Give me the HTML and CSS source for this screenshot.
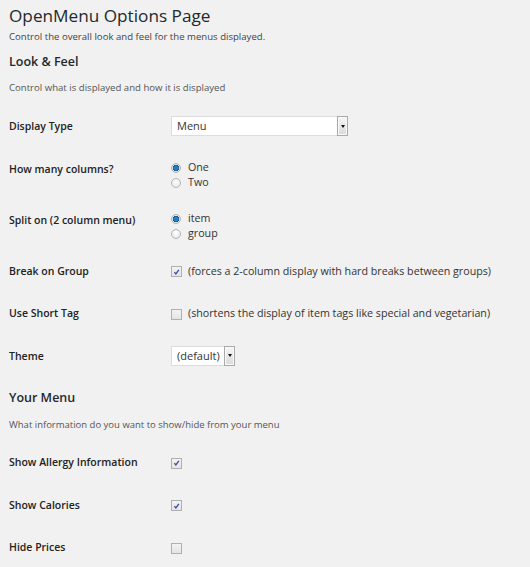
FILE: index.html
```html
<!DOCTYPE html>
<html>
<head>
<meta charset="utf-8">
<link rel="stylesheet" href="styles.css">
</head>
<body>
<div class="page">
  <h1 class="title">OpenMenu Options Page</h1>
  <p class="sub">Control the overall look and feel for the menus displayed.</p>

  <h2 class="section">Look &amp; Feel</h2>
  <p class="desc">Control what is displayed and how it is displayed</p>

  <div class="form">
    <div class="row">
      <div class="label">Display Type</div>
      <div class="field">
        <div class="select wide"><span class="sel-text">Menu</span><span class="sel-btn"><span class="tri"></span></span></div>
      </div>
    </div>
    <div class="row">
      <div class="label">How many columns?</div>
      <div class="field radios">
        <div class="opt"><span class="radio on"></span><span>One</span></div>
        <div class="opt"><span class="radio"></span><span>Two</span></div>
      </div>
    </div>
    <div class="row">
      <div class="label">Split on (2 column menu)</div>
      <div class="field radios">
        <div class="opt"><span class="radio on"></span><span>item</span></div>
        <div class="opt"><span class="radio"></span><span>group</span></div>
      </div>
    </div>
    <div class="row">
      <div class="label">Break on Group</div>
      <div class="field check-line">
        <span class="checkbox on"><svg viewBox="0 0 10 10" width="10" height="10"><path d="M2.6 5.2 L4.3 7.2 L7.6 2.6" fill="none" stroke="#3a4fa8" stroke-width="1.5"/></svg></span>
        <span>(forces a 2-column display with hard breaks between groups)</span>
      </div>
    </div>
    <div class="row">
      <div class="label">Use Short Tag</div>
      <div class="field check-line">
        <span class="checkbox"></span>
        <span>(shortens the display of item tags like special and vegetarian)</span>
      </div>
    </div>
    <div class="row">
      <div class="label">Theme</div>
      <div class="field">
        <div class="select narrow"><span class="sel-text">(default)</span><span class="sel-btn"><span class="tri"></span></span></div>
      </div>
    </div>
  </div>

  <h2 class="section s2">Your Menu</h2>
  <p class="desc d2">What information do you want to show/hide from your menu</p>

  <div class="form f2">
    <div class="row">
      <div class="label">Show Allergy Information</div>
      <div class="field check-line">
        <span class="checkbox on"><svg viewBox="0 0 10 10" width="10" height="10"><path d="M2.6 5.2 L4.3 7.2 L7.6 2.6" fill="none" stroke="#3a4fa8" stroke-width="1.5"/></svg></span>
      </div>
    </div>
    <div class="row">
      <div class="label">Show Calories</div>
      <div class="field check-line">
        <span class="checkbox on"><svg viewBox="0 0 10 10" width="10" height="10"><path d="M2.6 5.2 L4.3 7.2 L7.6 2.6" fill="none" stroke="#3a4fa8" stroke-width="1.5"/></svg></span>
      </div>
    </div>
    <div class="row">
      <div class="label">Hide Prices</div>
      <div class="field check-line">
        <span class="checkbox"></span>
      </div>
    </div>
  </div>
</div>
</body>
</html>
```

FILE: styles.css
```css
html, body {
  margin: 0;
  padding: 0;
  background: #f1f1f1;
}
body {
  font-family: "Open Sans", "Liberation Sans", sans-serif;
  color: #222;
}
.page {
  padding: 5px 9px 0 9px;
}
.title {
  margin: 0;
  font-size: 17.2px;
  line-height: 22px;
  font-weight: 400;
  color: #23282d;
}
.sub {
  margin: 2px 0 0 0;
  font-size: 9.6px;
  line-height: 15px;
  color: #444;
}
.section {
  margin: 9px 0 0 0;
  font-size: 12.5px;
  line-height: 18px;
  font-weight: 600;
  color: #23282d;
}
.section.s2 {
  margin-top: 12px;
}
.desc {
  margin: 9px 0 0 0;
  font-size: 9.6px;
  line-height: 15px;
  color: #555;
}
.desc.d2 {
  margin-top: 10px;
  font-size: 9.5px;
}
.form {
  margin-top: 10px;
}
.form.f2 {
  margin-top: 9px;
}
.row {
  display: grid;
  grid-template-columns: 162px 1fr;
  padding: 11px 0 11.5px 0;
}
.label {
  font-size: 10.5px;
  line-height: 20px;
  font-weight: 600;
  color: #222;
}
.field {
  font-size: 10.7px;
  color: #333;
}
.select {
  display: flex;
  height: 20px;
  box-sizing: border-box;
  background: #fff;
  border: 1px solid #ddd;
  border-right: none;
}
.select.wide { width: 177px; }
.select.narrow { width: 64px; }
.sel-text {
  flex: 1;
  padding-left: 5px;
  line-height: 18px;
  font-size: 11px;
  color: #333;
}
.sel-btn {
  width: 11px;
  margin-top: -1px;
  height: 20px;
  box-sizing: border-box;
  border: 1px solid #a9a9a9;
  background: linear-gradient(#f6f6f6, #dadada);
  box-shadow: inset 0 0 0 1px #fafafa;
  display: flex;
  align-items: center;
  justify-content: center;
}
.tri {
  width: 0;
  height: 0;
  border-left: 2.5px solid transparent;
  border-right: 2.5px solid transparent;
  border-top: 3px solid #111;
}
.radios {
  padding-top: 1.5px;
  margin-bottom: -3px;
}
.opt {
  display: flex;
  align-items: center;
  gap: 7px;
  height: 15px;
  line-height: 15px;
}
.radio {
  width: 10px;
  height: 10px;
  box-sizing: border-box;
  border-radius: 50%;
  border: 1px solid #b4b4b4;
  background: radial-gradient(circle at 50% 35%, #ffffff, #e2e2e2);
  display: inline-block;
}
.radio.on {
  background: radial-gradient(circle at 50% 50%, #1e6fb8 0, #2a88c8 1.8px, #0d4f8a 3px, #e9e9e9 3.4px, #d6d6d6 100%);
}
.check-line {
  display: flex;
  align-items: center;
  gap: 6px;
  height: 20px;
}
.checkbox {
  width: 11px;
  height: 11px;
  box-sizing: border-box;
  border: 1px solid #b0b0b0;
  background: linear-gradient(#f3f3f3, #e4e4e4);
  display: inline-flex;
  align-items: center;
  justify-content: center;
  position: relative;
  top: 1px;
  flex: none;
}
.checkbox svg {
  display: block;
}
```
